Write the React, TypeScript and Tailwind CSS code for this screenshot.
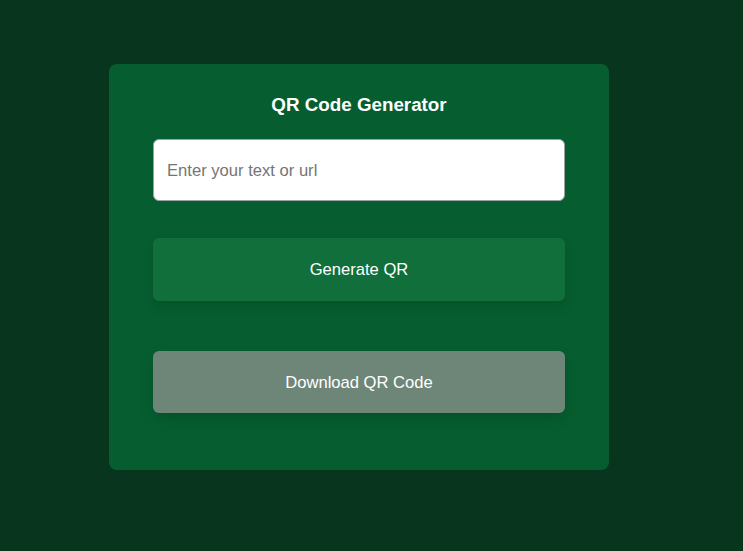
import { useState } from 'react';

export default function App() {
  const [text, setText] = useState('');

  return (
    <div className="min-h-[551px] w-full bg-[#08351e] pt-[64px] font-['Liberation_Sans',Arial,sans-serif]">
      <div className="ml-[109px] flex h-[406px] w-[500px] flex-col rounded-lg bg-[#065e30] px-[44px] pt-[30px]">
        {/* Title */}
        <h1 className="h-[22px] text-center text-[18.8px] leading-[22px] font-bold text-white">
          QR Code Generator
        </h1>
        <input
          value={text}
          onChange={e => setText(e.target.value)}
          placeholder="Enter your text or url"
          className="mt-[23px] h-[62px] w-full rounded-md border border-[#9aa59e] bg-white px-[13px] pt-[2px] text-[16.6px] text-gray-800 placeholder:text-[#757575] outline-none"
        />
        <button className="mt-[37px] h-[63px] w-full rounded-md bg-[#116f3c] pt-[2px] text-[16.6px] text-white shadow-[0_6px_12px_rgba(0,0,0,0.12)]">
          Generate QR
        </button>
        <button className="mt-[50px] h-[62px] w-full rounded-md bg-[#6e8677] pt-[2px] text-[16.6px] text-white shadow-[0_6px_14px_rgba(0,0,0,0.14)]">
          Download QR Code
        </button>
      </div>
    </div>
  );
}
